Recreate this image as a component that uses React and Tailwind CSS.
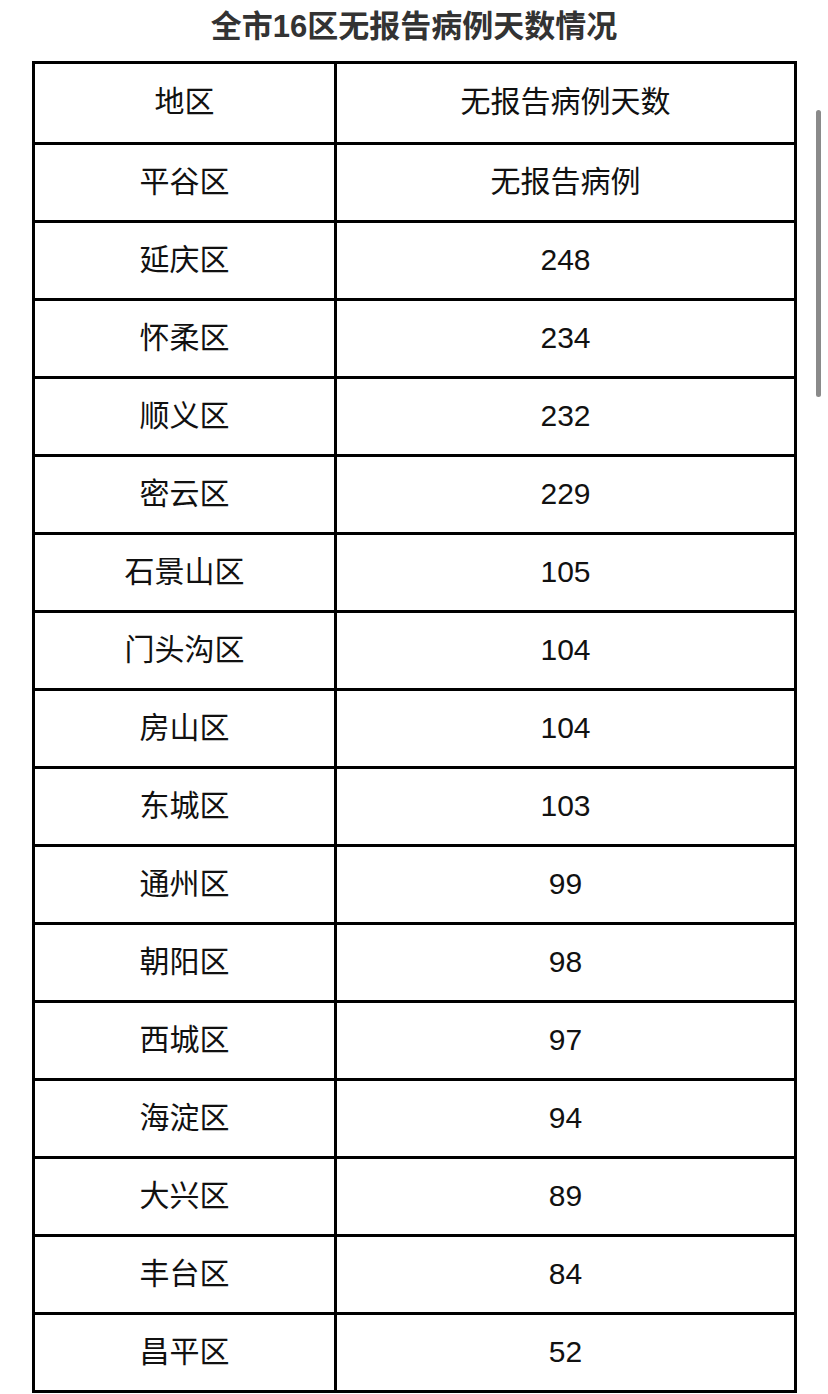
const rows = [
  ["平谷区", "无报告病例"],
  ["延庆区", "248"],
  ["怀柔区", "234"],
  ["顺义区", "232"],
  ["密云区", "229"],
  ["石景山区", "105"],
  ["门头沟区", "104"],
  ["房山区", "104"],
  ["东城区", "103"],
  ["通州区", "99"],
  ["朝阳区", "98"],
  ["西城区", "97"],
  ["海淀区", "94"],
  ["大兴区", "89"],
  ["丰台区", "84"],
  ["昌平区", "52"],
];

const font = { fontFamily: '"Liberation Sans", "Noto Sans CJK SC", sans-serif' };

function Row({ left, right, first }) {
  return (
    <div className={`flex h-[78px] ${first ? "" : "border-t-[3px] border-black"}`}>
      <div className="w-[299px] pb-[3px] flex items-center justify-center">{left}</div>
      <div className="flex-1 pb-[3px] border-l-[3px] border-black flex items-center justify-center">{right}</div>
    </div>
  );
}

export default function App() {
  return (
    <div className="relative w-[828px] h-[1394px] bg-white overflow-hidden text-[#111]" style={font}>
      <h1 className="pt-[7px] h-[61px] text-center text-[31px] leading-[40px] font-semibold text-[#333]">
        全市16区无报告病例天数情况
      </h1>

      <div className="ml-[32px] w-[765px] border-[3px] border-black text-[30px]">
        <Row left="地区" right="无报告病例天数" first />
        {rows.map(([l, r]) => (
          <Row key={l} left={l} right={r} />
        ))}
      </div>

      {/* scroll indicator */}
      <div className="absolute left-[816px] top-[110px] w-[5px] h-[287px] rounded-full bg-[#8a8a8a]" />
    </div>
  );
}
